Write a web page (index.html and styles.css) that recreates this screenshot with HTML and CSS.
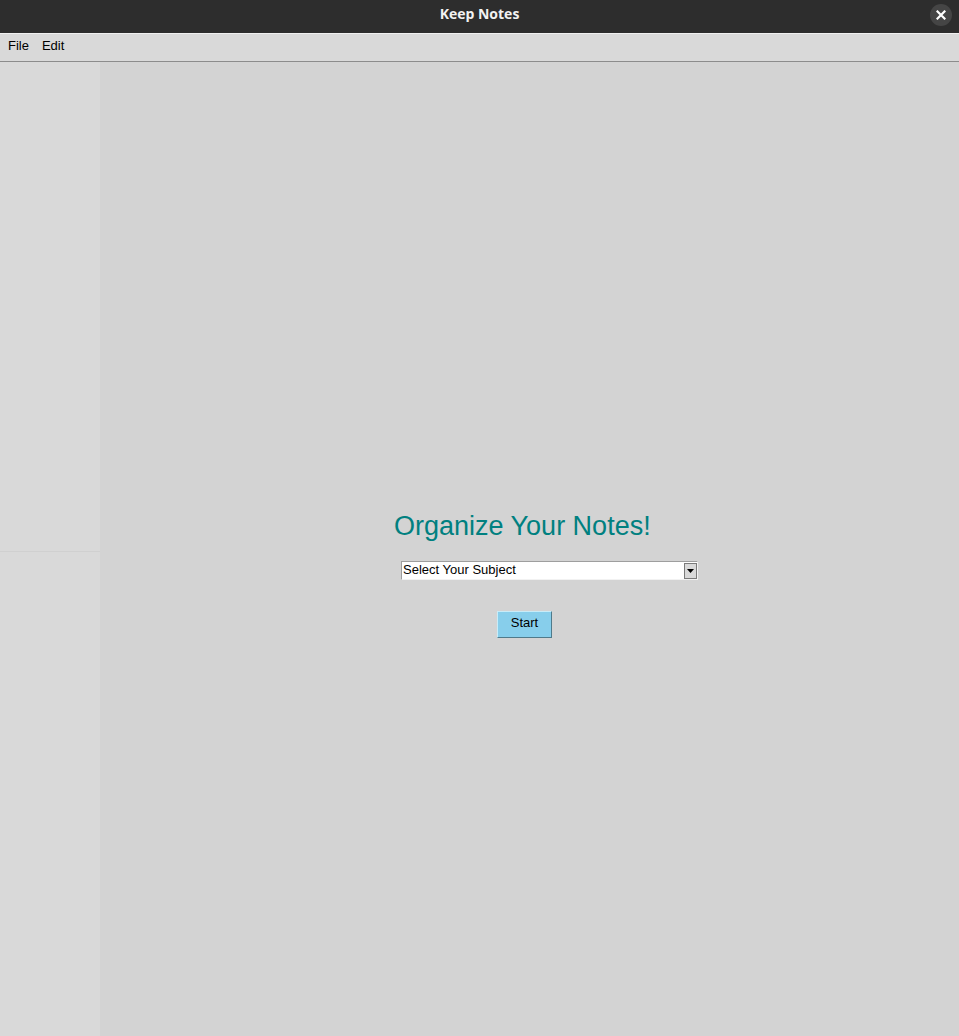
FILE: index.html
```html
<!DOCTYPE html>
<html>
<head>
<meta charset="utf-8">
<title>Keep Notes</title>
<link rel="stylesheet" href="styles.css">
</head>
<body>
<div class="window">
  <header class="titlebar">
    <span class="title">Keep Notes</span>
    <span class="close">
      <svg width="10" height="10" viewBox="0 0 10 10"><path d="M1.5 1.5 L8.5 8.5 M8.5 1.5 L1.5 8.5" stroke="#fff" stroke-width="2.2" stroke-linecap="square"/></svg>
    </span>
  </header>
  <nav class="menubar">
    <span class="menu-item">File</span>
    <span class="menu-item">Edit</span>
  </nav>
  <div class="body">
    <aside class="sidebar">
      <div class="side-top"></div>
      <div class="side-bottom"></div>
    </aside>
    <main class="main">
      <h1 class="heading">Organize Your Notes!</h1>
      <div class="combo">
        <span class="combo-text">Select Your Subject</span>
        <span class="combo-arrow">
          <svg width="7" height="4" viewBox="0 0 7 4"><path d="M0 0 H7 L3.5 4 Z" fill="#000"/></svg>
        </span>
      </div>
      <button class="start">Start</button>
    </main>
  </div>
</div>
</body>
</html>
```
FILE: styles.css
```css
html, body {
  margin: 0;
  padding: 0;
  height: 100%;
  overflow: hidden;
}
body {
  font-family: "Liberation Sans", Arial, sans-serif;
  background: #d3d3d3;
}
.window {
  display: flex;
  flex-direction: column;
  height: 1036px;
}
.titlebar {
  position: relative;
  height: 33px;
  background: #2d2d2d;
  border-bottom: 1px solid #f0f0f0;
  display: flex;
  align-items: center;
  justify-content: center;
  flex-shrink: 0;
}
.title {
  color: #f2f2f2;
  font-family: "Open Sans", "DejaVu Sans", sans-serif;
  font-weight: 700;
  font-size: 14px;
  margin-top: -6px;
}
.close {
  position: absolute;
  right: 7px;
  top: 4px;
  width: 22px;
  height: 22px;
  border-radius: 50%;
  background: #454545;
  display: flex;
  align-items: center;
  justify-content: center;
}
.menubar {
  background: #d9d9d9;
  border-bottom: 1px solid #8c8c8c;
  display: flex;
  align-items: center;
  padding-left: 8px;
  gap: 13px;
  flex-shrink: 0;
  box-sizing: border-box;
  height: 28px;
}
.menu-item {
  font-size: 13px;
  color: #000;
  margin-top: -5px;
}
.body {
  flex: 1;
  display: flex;
}
.sidebar {
  width: 100px;
  display: flex;
  flex-direction: column;
  background: #d9d9d9;
  flex-shrink: 0;
}
.side-top {
  height: 489px;
  border-bottom: 1px solid #d0d0d0;
}
.side-bottom {
  flex: 1;
}
.main {
  flex: 1;
  background: #d3d3d3;
  display: flex;
  flex-direction: column;
  align-items: flex-start;
  padding-top: 449px;
}
.heading {
  margin: 0 0 0 294px;
  font-weight: normal;
  font-size: 27px;
  line-height: 31px;
  color: #008080;
}
.combo {
  margin: 19px 0 0 301px;
  width: 297px;
  height: 19px;
  box-sizing: border-box;
  background: #fff;
  border-top: 1px solid #9e9e9e;
  border-left: 1px solid #9e9e9e;
  border-right: 1px solid #f2f2f2;
  border-bottom: 1px solid #f2f2f2;
  display: flex;
  align-items: center;
  justify-content: space-between;
}
.combo-text {
  font-size: 13px;
  color: #000;
  padding-left: 1px;
  margin-top: -2px;
}
.combo-arrow {
  width: 13px;
  height: 16px;
  box-sizing: border-box;
  background: #d9d9d9;
  border: 1px solid #7a7a7a;
  display: flex;
  align-items: center;
  justify-content: center;
}
.start {
  margin: 31px 0 0 397px;
  width: 55px;
  height: 27px;
  box-sizing: border-box;
  background: #87ceeb;
  border-top: 1px solid #c8ecf8;
  border-left: 1px solid #c8ecf8;
  border-right: 1px solid #4f7a8a;
  border-bottom: 1px solid #4f7a8a;
  font-family: "Liberation Sans", Arial, sans-serif;
  font-size: 13px;
  color: #000;
  padding: 0 0 4px;
}
```
